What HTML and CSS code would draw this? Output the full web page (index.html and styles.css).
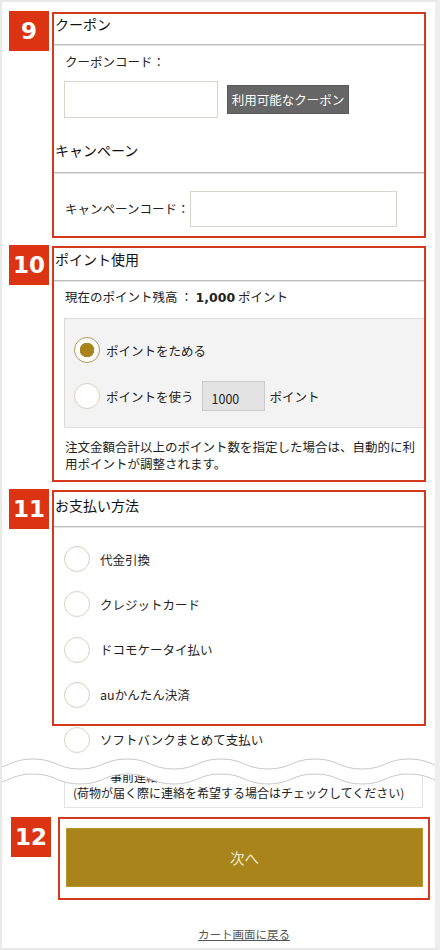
FILE: index.html
```html
<!DOCTYPE html>
<html lang="ja">
<head>
    <meta charset="UTF-8">
    <meta name="viewport" content="width=device-width, initial-scale=1.0">
    <title>ご注文手続き</title>
    <link rel="stylesheet" href="styles.css">
</head>
<body>

<div class="page">

    <div class="step">
        <div class="badge">9</div>
        <div class="box">
            <h2 class="head">クーポン</h2>
            <div class="coupon">
                <p class="label">クーポンコード：</p>
                <div class="coupon-row">
                    <input type="text" class="code-input">
                    <button type="button" class="coupon-btn">利用可能なクーポン</button>
                </div>
            </div>
            <h2 class="head head-campaign">キャンペーン</h2>
            <div class="campaign">
                <span class="label">キャンペーンコード：</span>
                <input type="text" class="code-input campaign-input">
            </div>
        </div>
    </div>

    <div class="step">
        <div class="badge">10</div>
        <div class="box">
            <h2 class="head head-point">ポイント使用</h2>
            <p class="balance">現在のポイント残高 ： <b>1,000</b> ポイント</p>
            <div class="pointbox">
                <label class="radio-row">
                    <input type="radio" name="point" checked>
                    <span>ポイントをためる</span>
                </label>
                <label class="radio-row">
                    <input type="radio" name="point">
                    <span>ポイントを使う</span>
                    <input type="text" class="point-input" value="1000">
                    <span>ポイント</span>
                </label>
            </div>
            <p class="note">注文金額合計以上のポイント数を指定した場合は、自動的に利用ポイントが調整されます。</p>
        </div>
    </div>

    <div class="step">
        <div class="badge">11</div>
        <div class="box">
            <h2 class="head head-pay">お支払い方法</h2>
            <div class="pay-list">
                <label class="pay-row"><input type="radio" name="pay"><span>代金引換</span></label>
                <label class="pay-row"><input type="radio" name="pay"><span>クレジットカード</span></label>
                <label class="pay-row"><input type="radio" name="pay"><span>ドコモケータイ払い</span></label>
                <label class="pay-row"><input type="radio" name="pay"><span>auかんたん決済</span></label>
            </div>
        </div>
    </div>

    <div class="tail">
        <label class="pay-row"><input type="radio" name="pay"><span>ソフトバンクまとめて支払い</span></label>
        <div class="contact">
            <p class="contact-label">事前連絡</p>
            <p class="contact-note">(荷物が届く際に連絡を希望する場合はチェックしてください)</p>
        </div>
        <svg class="wave" width="440" height="40" viewBox="0 0 440 40">
            <path fill="#fff" d="M-14 18 C9.5 18 9.5 8 33 8 S56.5 18 80 18 S103.5 8 127 8 S150.5 18 174 18 S197.5 8 221 8 S244.5 18 268 18 S291.5 8 315 8 S338.5 18 362 18 S385.5 8 409 8 S432.5 18 456 18 L456 33 C432.5 33 432.5 23 409 23 S385.5 33 362 33 S338.5 23 315 23 S291.5 33 268 33 S244.5 23 221 23 S197.5 33 174 33 S150.5 23 127 23 S103.5 33 80 33 S56.5 23 33 23 S9.5 33 -14 33 Z"/>
            <path fill="none" stroke="#c9c9c9" d="M-14 18 C9.5 18 9.5 8 33 8 S56.5 18 80 18 S103.5 8 127 8 S150.5 18 174 18 S197.5 8 221 8 S244.5 18 268 18 S291.5 8 315 8 S338.5 18 362 18 S385.5 8 409 8 S432.5 18 456 18"/>
            <path fill="none" stroke="#c9c9c9" d="M-14 33 C9.5 33 9.5 23 33 23 S56.5 33 80 33 S103.5 23 127 23 S150.5 33 174 33 S197.5 23 221 23 S244.5 33 268 33 S291.5 23 315 23 S338.5 33 362 33 S385.5 23 409 23 S432.5 33 456 33"/>
        </svg>
    </div>

    <div class="step step-next">
        <div class="badge">12</div>
        <div class="box box-next">
            <button type="button" class="next-btn">次へ</button>
        </div>
    </div>

    <p class="back"><a href="#">カート画面に戻る</a></p>

</div>

</body>
</html>
```

FILE: styles.css
```css
body {
    margin: 0;
    background: #fff;
}
.page {
    width: 440px;
    height: 950px;
    box-sizing: border-box;
    border: 2px solid #e9e9e9;
    border-right: 5px solid #eeeeee;
    padding: 10px 0 0 7px;
    font-family: "Noto Sans CJK JP", sans-serif;
    color: #222;
    overflow: hidden;
}
p, h2 {
    margin: 0;
}
.step {
    display: flex;
    align-items: flex-start;
    gap: 3px;
    margin-bottom: 8px;
}
.badge {
    width: 40px;
    height: 40px;
    margin-top: -1px;
    background: #dc3412;
    color: #fff;
    font: bold 23px/40px "DejaVu Sans", sans-serif;
    text-align: center;
}
.box {
    width: 374px;
    box-sizing: border-box;
    border: 2px solid #d5391c;
}
.head {
    font-size: 14px;
    font-weight: normal;
    line-height: 20px;
    padding: 0 0 10px 1px;
    border-bottom: 1px solid #bcbcbc;
    box-shadow: 0 1px 0 #e4e4e4;
    color: #111;
}
.head-campaign {
    margin-top: 22px;
    padding-bottom: 12px;
}
.head-point {
    padding: 1px 0 11px 1px;
}
.head-pay {
    padding: 3px 0 11px 1px;
}
.label {
    font-size: 12.5px;
    line-height: 18px;
}
.code-input {
    box-sizing: border-box;
    width: 154px;
    height: 37px;
    border: 1px solid #d9d5c8;
    background: #fff;
    margin: 0;
}
.coupon {
    padding: 8px 0 0 10px;
}
.coupon .label {
    padding-left: 1px;
}
.coupon-row {
    display: flex;
    align-items: center;
    gap: 9px;
    margin-top: 10px;
}
.coupon-btn {
    width: 122px;
    height: 29px;
    padding: 0;
    border: 1px solid #5a5a5a;
    background: #666;
    color: #fff;
    font-family: "Noto Sans CJK JP", sans-serif;
    font-size: 12.5px;
}
.campaign {
    display: flex;
    align-items: center;
    padding: 18px 0 9px 11px;
}
.campaign-input {
    width: 207px;
    height: 36px;
    margin-left: 1px;
}
.balance {
    font-size: 12.5px;
    line-height: 18px;
    padding: 7px 0 0 11px;
}
.balance b {
    font-family: "DejaVu Sans", sans-serif;
    font-size: 12.5px;
}
.pointbox {
    display: flex;
    flex-direction: column;
    gap: 16px;
    margin: 11px 0 0 10px;
    padding: 16px 0 16px 9px;
    background: #f3f3f3;
    border: 1px solid #dcdcdc;
    border-right: none;
}
.radio-row, .pay-row {
    display: flex;
    align-items: center;
    font-size: 12.5px;
    height: 30px;
    gap: 6px;
}
input[type="radio"] {
    appearance: none;
    width: 26px;
    height: 26px;
    margin: 0;
    border: 1.5px solid #d8d1c2;
    border-radius: 50%;
    background: #fff;
    flex-shrink: 0;
}
input[type="radio"]:checked {
    border-color: #b39a55;
    background: radial-gradient(circle, #a8841a 0 7px, #fff 7.5px);
}
.point-input {
    box-sizing: border-box;
    width: 63px;
    height: 30px;
    margin: 0 0 0 2px;
    padding: 4px 0 0 9px;
    background: #e3e3e3;
    border: 1px solid #cbcbcb;
    font-family: "Noto Sans CJK JP", sans-serif;
    font-size: 12.5px;
    color: #222;
}
.radio-row .point-input + span {
    margin-left: -1px;
}
.note {
    font-size: 12.5px;
    line-height: 17px;
    padding: 10px 0 8px 11px;
}
.pay-list {
    display: flex;
    flex-direction: column;
    gap: 19.3px;
    padding: 19px 0 16px 10px;
}
.pay-row {
    height: 26px;
    gap: 10px;
}
.tail {
    position: relative;
    margin: -7px 0 0 55px;
    width: 359px;
}
.contact {
    margin-top: 16px;
    border: 1px solid #e3e3e3;
    padding: 0 0 5px 8px;
}
.contact-label {
    font-size: 12px;
    line-height: 14px;
    padding-left: 37px;
}
.contact-note {
    font-size: 12px;
    line-height: 18px;
}
.wave {
    position: absolute;
    top: 24px;
    left: -64px;
}
.step-next {
    margin: 9px 0 0 2px;
    gap: 7px;
}
.step-next .badge {
    margin-top: 0;
}
.box-next {
    width: 372px;
    padding: 9px 0 11px 6px;
}
.next-btn {
    display: block;
    width: 357px;
    height: 59px;
    border: 1px solid #b8962e;
    background: #a8841a;
    color: #f4edd6;
    font-family: "Noto Sans CJK JP", sans-serif;
    font-size: 14.5px;
}
.back {
    width: 372px;
    margin: 26px 0 0 49px;
    text-align: center;
    font-size: 11.5px;
    line-height: 16px;
}
.back a {
    color: #555;
}
```
